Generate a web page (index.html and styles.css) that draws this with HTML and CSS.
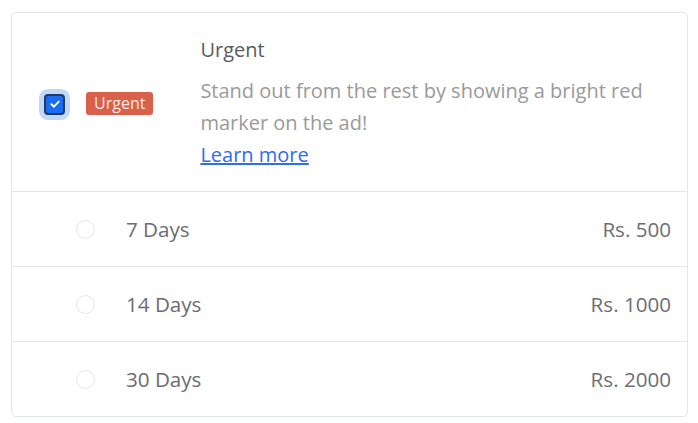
FILE: index.html
```html
<!DOCTYPE html>
<html>
<head>
<meta charset="utf-8">
<link rel="stylesheet" href="styles.css">
</head>
<body>
<div class="card">
  <div class="head">
    <span class="check"><svg width="12" height="12" viewBox="0 0 12 12"><path d="M2.4 6.2 L5 8.7 L9.7 3.6" fill="none" stroke="#fff" stroke-width="1.9" stroke-linecap="round" stroke-linejoin="round"/></svg></span>
    <span class="badge">Urgent</span>
    <div class="info">
      <div class="title">Urgent</div>
      <div class="desc">Stand out from the rest by showing a bright red marker on the ad!</div>
      <a class="link" href="#">Learn more</a>
    </div>
  </div>
  <div class="row"><span class="radio"></span><span class="days">7 Days</span><span class="price">Rs. 500</span></div>
  <div class="row"><span class="radio"></span><span class="days">14 Days</span><span class="price">Rs. 1000</span></div>
  <div class="row"><span class="radio"></span><span class="days">30 Days</span><span class="price">Rs. 2000</span></div>
</div>
</body>
</html>
```
FILE: styles.css
```css
html, body { margin: 0; padding: 0; background: #fff; }
body { padding: 12px 10px 0 11px; font-family: "Open Sans", sans-serif; }
.card {
  width: 677px;
  box-sizing: border-box;
  border: 1px solid #e3e6ea;
  border-radius: 5px;
}
.head {
  display: flex;
  align-items: center;
  height: 179px;
  box-sizing: border-box;
  border-bottom: 1px solid #e3e6ea;
  padding-left: 32px;
}
.check {
  width: 21px; height: 21px;
  box-sizing: border-box;
  background: #1a6cf2;
  border: 2px solid #203a63;
  border-radius: 4px;
  box-shadow: 0 0 0 5px #c2d8fb;
  display: flex; align-items: center; justify-content: center;
  margin-top: 4px;
}
.badge {
  margin-left: 21px;
  background: #d9604a;
  color: #fbe8e4;
  font-size: 16px;
  line-height: 23px;
  height: 23px;
  padding: 0 8px;
  border-radius: 3px;
  margin-top: 2px;
}
.info {
  margin-left: 47px;
  color: #999;
  margin-top: 3px;
}
.title {
  font-size: 20px;
  color: #585b5f;
  line-height: 28px;
  margin-bottom: 11px;
}
.desc {
  font-size: 20px;
  line-height: 32px;
  color: #9a9a9a;
  width: 470px;
}
.link {
  font-size: 20px;
  line-height: 32px;
  color: #2f6cf0;
  text-decoration: underline;
}
.row {
  display: flex;
  align-items: center;
  height: 75px;
  box-sizing: border-box;
  border-bottom: 1px solid #e3e6ea;
  padding: 0 16px 0 64px;
  font-size: 20.6px;
  color: #6a6d71;
}
.row:last-child { border-bottom: none; height: 74px; }
.radio {
  width: 19px; height: 19px;
  box-sizing: border-box;
  border: 1.5px solid #e3e6ea;
  border-radius: 50%;
}
.days { margin-left: 31px; flex: 1; }
.price { color: #6c6f73; }
```
